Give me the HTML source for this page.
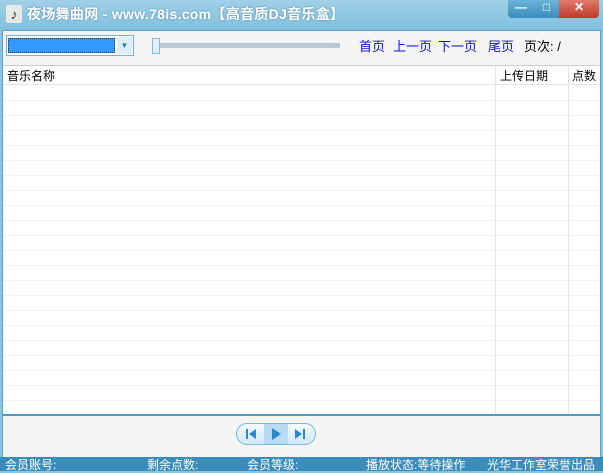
<!DOCTYPE html><html><head><style>
body{margin:0;width:603px;height:471px;overflow:hidden;position:relative;font-family:"Liberation Sans","Noto Sans CJK SC",sans-serif;font-size:12px;background:#8cc4dc}
.a{position:absolute;white-space:nowrap}
</style></head><body>
<div class="a" style="left:0;top:0;width:603px;height:30px;background:linear-gradient(#9fd0e6,#82bfdc)"></div>
<div class="a" style="left:6px;top:5px;width:16px;height:18px;background:#e8e8e8;border-radius:2px;font-size:14px;line-height:18px;text-align:center;color:#333">♪</div>
<div class="a" style="left:27px;top:4px;color:#fff;font-weight:bold;font-size:14px;letter-spacing:0.3px;text-shadow:0 0 2px #5a8aa8">夜场舞曲网 - www.78is.com【高音质DJ音乐盒】</div>
<div class="a" style="left:508px;top:0;width:26px;height:18px;background:linear-gradient(#6cb4d8,#3a8cbc);border-radius:0 0 0 4px;color:#fff;text-align:center;font-weight:bold">—</div>
<div class="a" style="left:534px;top:0;width:25px;height:18px;background:linear-gradient(#6cb4d8,#3a8cbc);color:#fff;text-align:center">□</div>
<div class="a" style="left:559px;top:0;width:40px;height:18px;background:linear-gradient(#e07b6a,#c0392b);border-radius:0 0 4px 0;color:#fff;text-align:center;font-weight:bold">✕</div>
<div class="a" style="left:2px;top:30px;width:599px;height:428px;background:#f4f4f4;border:1px solid #5aa0c8;box-sizing:border-box"></div>
<div class="a" style="left:6px;top:35px;width:128px;height:21px;border:1px solid #7ab0d0;background:#fff;box-sizing:border-box"></div>
<div class="a" style="left:8px;top:38px;width:107px;height:15px;background:#3399ff;border:1px dotted #333;box-sizing:border-box"></div>
<div class="a" style="left:117px;top:37px;width:15px;height:17px;background:#ddeef8;font-size:8px;color:#3a7ab0;text-align:center;line-height:17px">▼</div>
<div class="a" style="left:154px;top:43px;width:186px;height:5px;background:#b8c8d4"></div>
<div class="a" style="left:152px;top:38px;width:6px;height:14px;background:#e0f0ff;border:1px solid #8ab8d8"></div>
<div class="a" style="left:359px;top:36px;color:#1010e0;font-size:13px">首页</div>
<div class="a" style="left:393px;top:36px;color:#1010e0;font-size:13px">上一页</div>
<div class="a" style="left:438px;top:36px;color:#1010e0;font-size:13px">下一页</div>
<div class="a" style="left:488px;top:36px;color:#1010e0;font-size:13px">尾页</div>
<div class="a" style="left:524px;top:36px;font-size:13px;color:#000">页次: /</div>
<div class="a" style="left:3px;top:65px;width:597px;height:350px;background:#fff;background-image:repeating-linear-gradient(#fff 0 14px,#f2f2f2 14px 15px);background-position:0 20px;border-top:1px solid #ccc"></div>
<div class="a" style="left:3px;top:66px;width:597px;height:18px;background:#fff;border-bottom:1px solid #e4e4e4"></div>
<div class="a" style="left:7px;top:67px;font-size:12px">音乐名称</div>
<div class="a" style="left:495px;top:66px;width:1px;height:349px;background:#e4e4e4"></div>
<div class="a" style="left:568px;top:66px;width:1px;height:349px;background:#e4e4e4"></div>
<div class="a" style="left:500px;top:67px">上传日期</div>
<div class="a" style="left:572px;top:67px">点数</div>
<div class="a" style="left:3px;top:414px;width:597px;height:2px;background:#4a9cc8"></div>
<div class="a" style="left:236px;top:423px;width:80px;height:22px;border:1px solid #7ab8dc;border-radius:11px;background:linear-gradient(#f4fbff,#cfe7f6);box-sizing:border-box"></div>
<div class="a" style="left:264px;top:424px;width:24px;height:20px;background:#b8dcf2"></div>
<svg class="a" style="left:236px;top:423px" width="80" height="22"><g fill="#2a88c8"><rect x="10" y="6" width="2" height="10"/><path d="M20 6v10l-7-5z"/><path d="M36 5v12l9-6z"/><path d="M59 6v10l7-5z"/><rect x="67" y="6" width="2" height="10"/></g></svg>
<div class="a" style="left:0;top:457px;width:603px;height:14px;background:#3a8cbb;color:#fff;font-size:12px;line-height:16px">
<span class="a" style="left:5px">会员账号:</span><span class="a" style="left:147px">剩余点数:</span><span class="a" style="left:247px">会员等级:</span><span class="a" style="left:366px">播放状态:等待操作</span><span class="a" style="left:487px">光华工作室荣誉出品</span></div>
</body></html>
